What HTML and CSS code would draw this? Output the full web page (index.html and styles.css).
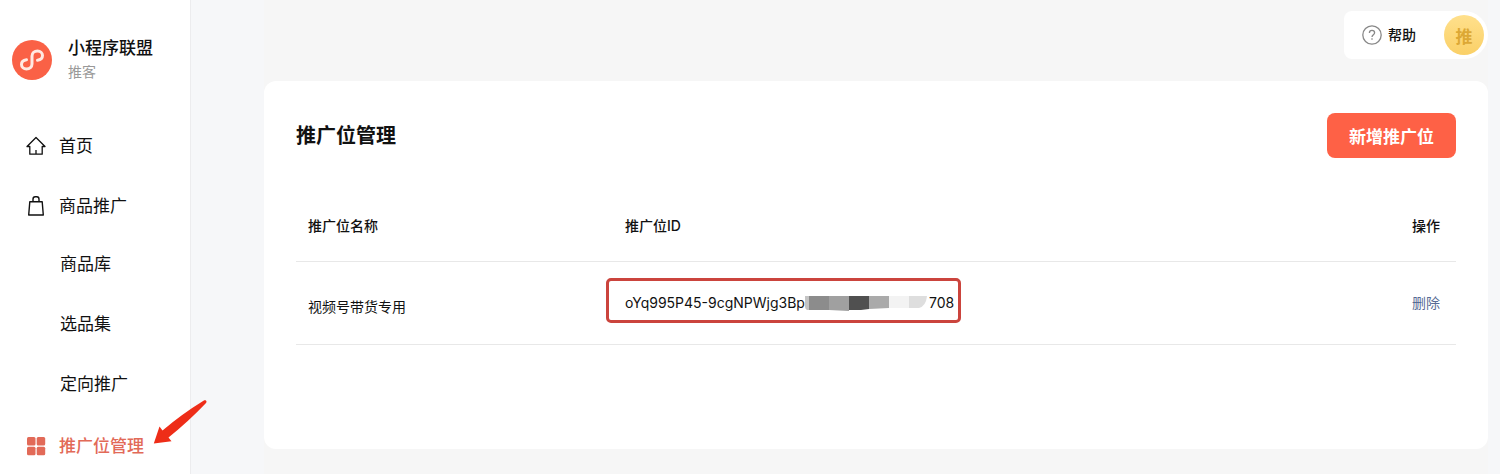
FILE: index.html
```html
<!DOCTYPE html>
<html lang="zh-CN">
  <head>
    <meta charset="utf-8">
    <title>推广位管理</title>
    <link rel="stylesheet" href="styles.css">
  </head>
  <body>
    <aside class="sidebar">
      <div class="brand">
        <svg class="logo" viewBox="0 0 40 40">
          <circle cx="20" cy="20" r="20" fill="#fa6146"/>
          <path d="M25.500 20.200c3-.4 5-2.300 5-4.700 0-2.600-2.200-4.500-5-4.500-3.100 0-5.500 2.100-5.500 4.900v8.200c0 2.800-2.400 4.900-5.500 4.900-2.800 0-5-1.900-5-4.500 0-2.400 2-4.300 5-4.700" fill="none" stroke="#ffe9e2" stroke-width="3" stroke-linecap="round"/>
        </svg>
        <div>
          <div class="brand-name">小程序联盟</div>
          <div class="brand-role">推客</div>
        </div>
      </div>
      <nav class="menu">
        <a class="menu-item" href="#">
          <svg class="icon" viewBox="0 0 20 20" fill="none" stroke="#111" stroke-width="1.3" stroke-linejoin="round">
            <path d="M10 1.500L1 10.500h2.800v7.700h12.400v-7.700H19zM10 14v4.200"/>
          </svg>
          首页
        </a>
        <a class="menu-item" href="#">
          <svg class="icon" viewBox="0 0 20 20" fill="none" stroke="#111" stroke-width="1.400" stroke-linejoin="round">
            <path d="M3.800 5.700h12.400l1.100 13.300H2.700zM7 5.500V3.300C7 1.800 8 .8 9.200.8h1.600C12 .8 13 1.800 13 3.300v2.200"/>
          </svg>
          商品推广
        </a>
        <div class="submenu">
          <a class="menu-item" href="#">商品库</a>
          <a class="menu-item" href="#">选品集</a>
          <a class="menu-item" href="#">定向推广</a>
        </div>
        <a class="menu-item active" href="#">
          <svg class="icon" viewBox="0 0 20 20" fill="#e26a58">
            <rect x="1" y="1" width="8.500" height="8.500" rx="1.500"/>
            <rect x="10.700" y="1" width="8.500" height="8.500" rx="1.500"/>
            <rect x="1" y="10.700" width="8.500" height="8.500" rx="1.500"/>
            <rect x="10.700" y="10.700" width="8.500" height="8.500" rx="1.500"/>
          </svg>
          推广位管理
          <svg class="arrow" viewBox="0 0 54 44">
            <path d="M.8 43.500L6.500 26.500l3 4Q29 14 50.500 .8c2.300-1.300 4 .5 2.300 2.500Q35 22 15.500 37.500l3 3.800z" fill="#ee2d18"/>
          </svg>
        </a>
      </nav>
    </aside>

    <main class="main">
      <header class="topbar">
        <div class="account">
          <a class="help" href="#">
            <svg class="icon" viewBox="0 0 20 20" fill="none" stroke="#888" stroke-width="1.300">
              <circle cx="10" cy="10" r="9.200"/>
              <path d="M7.400 8c0-1.600 1.100-2.600 2.600-2.600s2.600 1 2.600 2.300c0 1.900-2.600 2-2.600 4.200"/>
              <path d="M10 13.300v1.500"/>
            </svg>
            帮助
          </a>
          <button class="avatar">推</button>
        </div>
      </header>

      <section class="card">
        <div class="card-head">
          <h1 class="card-title">推广位管理</h1>
          <button class="add-button">新增推广位</button>
        </div>
        <table class="table">
          <thead>
            <tr>
              <th class="col-name">推广位名称</th>
              <th>推广位ID</th>
              <th class="col-action">操作</th>
            </tr>
          </thead>
          <tbody>
            <tr>
              <td class="col-name"><div class="name">视频号带货专用</div></td>
              <td>
                <span class="slot-id">oYq995P45-9cgNPWjg3Bp<svg class="mask" viewBox="6 0 124 16">
                  <path d="M6 1h4v14H8Q6 14 6 12z" fill="#c4c4c4"/>
                  <path d="M10 1h20v14H10z" fill="#8c8c8c"/>
                  <path d="M30 1h20v15l-20-1z" fill="#a0a0a0"/>
                  <path d="M50 1h20v13l-8 1H50z" fill="#505050"/>
                  <path d="M70 1h20v12l-20 1z" fill="#aaa"/>
                  <path d="M90 1h20v12H90z" fill="#f3f3f3"/>
                  <path d="M110 1h18q-1 10-8 12h-10z" fill="#dedede"/>
                </svg>708</span>
              </td>
              <td class="col-action"><a class="delete" href="#">删除</a></td>
            </tr>
          </tbody>
        </table>
      </section>
    </main>
  </body>
</html>
```
FILE: styles.css
```css
* {
  box-sizing: border-box;
}
body {
  margin: 0;
  display: flex;
  min-height: 100vh;
  background-color: #f6f7f9;
  color: #111;
  font-family: Inter, 'Noto Sans CJK SC', sans-serif;
  font-size: 14px;
  line-height: 20px;
}
a {
  color: inherit;
  text-decoration: none;
}
button {
  border: 0;
  padding: 0;
  font-family: inherit;
  cursor: pointer;
}
.icon {
  width: 20px;
  height: 20px;
  flex: none;
}

/* sidebar */
.sidebar {
  width: 191px;
  flex: none;
  background-color: #fff;
  border-right: 1px solid #ececee;
}
.brand {
  display: flex;
  align-items: center;
  gap: 16px;
  padding: 36px 12px 32px;
}
.logo {
  width: 40px;
  height: 40px;
}
.brand-name {
  font-size: 17px;
  font-weight: 500;
  line-height: 24px;
}
.brand-role {
  color: #999;
  line-height: 24px;
}
.menu-item {
  position: relative;
  display: flex;
  align-items: center;
  gap: 13px;
  height: 60px;
  padding-left: 26px;
  font-size: 17px;
}
.submenu {
  margin-top: -2px;
  margin-bottom: 2px;
}
.submenu .menu-item {
  padding-left: 60px;
}
.menu-item.active {
  color: #e26a58;
  font-weight: 500;
}
.arrow {
  position: absolute;
  left: 153px;
  top: -16px;
  width: 54px;
  height: 44px;
}

/* content */
.main {
  flex: 1;
  margin-left: 73px;
  margin-right: 12px;
  background-color: #f6f6f6;
}
.topbar {
  display: flex;
  justify-content: flex-end;
  padding: 11px 0 22px;
}
.account {
  display: flex;
  align-items: center;
  gap: 28px;
  height: 48px;
  padding: 0 4px 0 18px;
  border-radius: 8px 24px 24px 8px;
  background-color: #fff;
}
.help {
  display: flex;
  align-items: center;
  gap: 6px;
  font-weight: 500;
}
.avatar {
  width: 40px;
  height: 40px;
  border-radius: 50%;
  background: linear-gradient(#ffe08c, #fad067);
  color: #dca835;
  font-size: 17px;
  font-weight: 700;
}
.card {
  min-height: 368px;
  padding: 32px;
  border-radius: 12px;
  background-color: #fff;
}
.card-head {
  display: flex;
  align-items: center;
  justify-content: space-between;
  margin-bottom: 34px;
}
.card-title {
  margin: 0;
  font-size: 20px;
  font-weight: 700;
}
.add-button {
  height: 45px;
  padding: 0 22px;
  border-radius: 8px;
  background-color: #fe6146;
  color: #fff;
  font-size: 17px;
  font-weight: 700;
}

/* table */
.table {
  width: 100%;
  border-collapse: collapse;
}
.table th,
.table td {
  padding: 0 12px;
  border-bottom: 1px solid #e8e8e8;
  text-align: left;
}
.table th {
  height: 69px;
  font-weight: 500;
}
.table td {
  height: 83px;
}
.table .col-name {
  width: 317px;
}
.table .col-action {
  padding-right: 16px;
  text-align: right;
}
.name {
  padding-top: 8px;
}
.slot-id {
  position: relative;
  display: inline-flex;
  align-items: center;
}
.slot-id::after {
  content: '';
  position: absolute;
  inset: -15px -7px -10px -19px;
  border: 3px solid #cb443d;
  border-radius: 5px;
}
.mask {
  width: 124px;
  height: 16px;
}
.delete {
  color: #576b95;
}
```
